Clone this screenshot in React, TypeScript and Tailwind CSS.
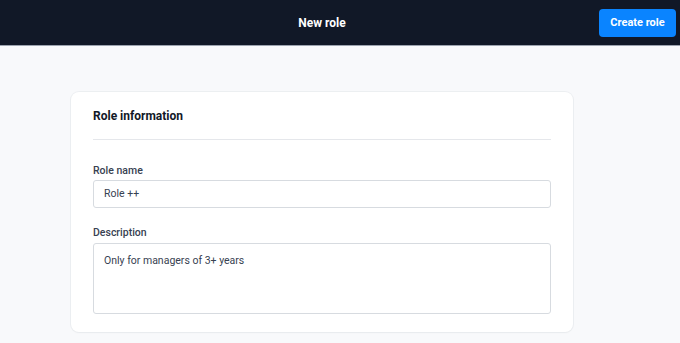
export default function App() {
  return (
    <div
      className="min-h-screen bg-[#f8f9fb] text-[#111827]"
      style={{ fontFamily: "Roboto, 'Liberation Sans', sans-serif" }}
    >
      <header className="relative flex h-[46px] items-center border-b border-[#9ca3af] bg-[#111827]">
        <div className="ml-[71px] w-[502px] text-center text-[12px] font-bold text-white">
          New role
        </div>
        <button className="absolute right-[4px] top-[9px] h-[28px] w-[77px] rounded-[4px] bg-[#0a84ff] text-[11px] font-bold text-white">
          Create role
        </button>
      </header>

      <main className="pl-[71px] pt-[46px]">
        <section className="w-[502px] rounded-[8px] bg-white px-[22px] pb-[18px] pt-[12px] shadow-[0_0_0_1px_rgba(229,231,235,0.6),0_1px_2px_rgba(0,0,0,0.04)]">
          <h2 className="h-[24px] text-[12px] font-bold leading-[24px] text-[#111827]">
            Role information
          </h2>
          <div className="mt-[11px] h-px bg-[#e5e7eb]" />

          <label className="mt-[22px] block text-[10.5px] font-medium leading-[18px] text-[#374151]">
            Role name
          </label>
          <div className="flex h-[28px] items-center rounded-[3px] border border-[#d7dbe0] px-[10px] text-[10.5px] text-[#374151]">
            Role ++
          </div>

          <label className="mt-[16px] block text-[10.5px] font-medium leading-[18px] text-[#374151]">
            Description
          </label>
          <div className="mt-px h-[71px] rounded-[3px] border border-[#d7dbe0] px-[10px] pt-[8px] text-[10.5px] leading-[18px] text-[#374151]">
            Only for managers of 3+ years
          </div>
        </section>
      </main>
    </div>
  );
}
